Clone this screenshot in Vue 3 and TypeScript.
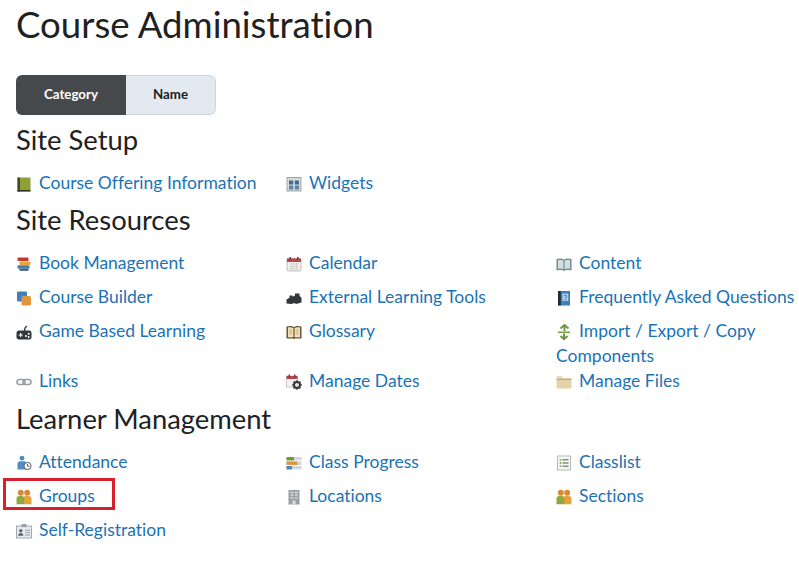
<template>
  <div class="page">
    <h1 class="title">Course Administration</h1>

    <div class="toggle">
      <button class="toggle-btn active">Category</button>
      <button class="toggle-btn name">Name</button>
    </div>

    <section v-for="section in sections" :key="section.title" class="section">
      <h2 class="section-title">{{ section.title }}</h2>
      <ul class="links">
        <li v-for="link in section.links" :key="link.label" class="link-item">
          <svg class="icon" viewBox="0 0 16 16" v-html="icons[link.icon]"></svg>
          <a href="#" class="link">{{ link.label }}</a>
          <span v-if="link.marked" class="marker"></span>
        </li>
      </ul>
    </section>
  </div>
</template>

<script setup lang="ts">
interface CourseLink {
  label: string;
  icon: string;
  marked?: boolean;
}

// small colour icons, 16 unit box
const icons: Record<string, string> = {
  offering: '<rect x="1.5" y="1.5" width="13" height="14" fill="#8f9e3a"/><rect x="1.5" y="1.5" width="2.5" height="14" fill="#3d4a24"/><rect x="1.5" y="14" width="13" height="1.5" fill="#2f3a20"/>',
  widgets: '<rect x="1" y="1.5" width="14" height="13.5" fill="#d7dadd" stroke="#8d949a" stroke-width=".8"/><rect x="3" y="4.5" width="4.2" height="4" fill="#44688f"/><rect x="8.8" y="4.5" width="4.2" height="4" fill="#44688f"/><rect x="3" y="9.5" width="4.2" height="4" fill="#5d83a8"/><rect x="8.8" y="9.5" width="4.2" height="4" fill="#5d83a8"/>',
  book: '<rect x="1.5" y="1.5" width="11" height="3.6" rx="1" fill="#c0392f"/><rect x="3.5" y="5.4" width="11" height="3.6" rx="1" fill="#e5a63a"/><rect x="1.5" y="9.2" width="12" height="3.6" rx="1" fill="#3d7fb5"/><rect x="3.5" y="12.8" width="9" height="2" fill="#4b5a63"/>',
  calendar: '<rect x="1" y="2.5" width="14" height="12.5" rx="1" fill="#f4f1ec" stroke="#aaa" stroke-width=".7"/><rect x="1" y="2.5" width="14" height="3.5" fill="#b6474a"/><rect x="3.5" y="1" width="1.5" height="3" fill="#7a3436"/><rect x="11" y="1" width="1.5" height="3" fill="#7a3436"/><path d="M3 8h10M3 10.500h10M3 13h10M5.500 7v6.500M8 7v6.500M10.500 7v6.500" stroke="#c2c2c2" stroke-width=".6"/>',
  content: '<path d="M.5 3C3.500 2 6.500 2.500 8 3.600 9.500 2.500 12.500 2 15.500 3v11.500C12.500 13.500 9.500 14 8 15c-1.500-1-4.500-1.500-7.500-.5z" fill="#6f9096"/><path d="M2 4.200c2.400-.6 4.300-.2 5.400.6v8.400C6.300 12.600 4.400 12.300 2 12.700zM14 4.200c-2.400-.6-4.300-.2-5.400.6v8.400c1.100-.6 3-.9 5.400-.5z" fill="#d3dfe1"/>',
  builder: '<rect x="1" y="1.500" width="10" height="10" rx="1" fill="#3f7fc4"/><rect x="5.500" y="6" width="9.500" height="9.500" rx="1.500" fill="#e2963c"/>',
  tools: '<path d="M.5 13.500V9.500l3-1.800V5.500h3v1.300L9 5.500V3.500h4.500v2.300L15.500 8v4.500l-5.500 1.500-1.500-1-3 1z" fill="#33373a"/>',
  faq: '<rect x="2" y="1" width="12" height="14.500" fill="#3f7fb8"/><rect x="2" y="1" width="2.800" height="14.500" fill="#1f2d3a"/><rect x="6.300" y="3.500" width="6" height="7.500" fill="#a8cde8"/><path d="M8 6c.4-1 2.700-1 2.700.3 0 1-1.300 1-1.300 2" fill="none" stroke="#2f6ba0" stroke-width=".9"/><rect x="9" y="9" width="1" height="1" fill="#2f6ba0"/>',
  game: '<path d="M8.500 7c0-2.500.5-4 2.500-5" fill="none" stroke="#33373a" stroke-width="1.300"/><rect x=".5" y="6.500" width="15" height="9" rx="2.500" fill="#33373a"/><path d="M2.700 11h4M4.700 9v4" stroke="#fff" stroke-width="1.100"/><circle cx="10" cy="12" r="1" fill="#fff"/><circle cx="12.700" cy="9.800" r="1" fill="#fff"/><circle cx="12.700" cy="13" r="1" fill="#fff"/>',
  glossary: '<path d="M.5 2.500c3-1 6-.7 7.500.5 1.500-1.200 4.500-1.500 7.500-.5v12H9l-1 .8-1-.8H.5z" fill="#6e5334"/><path d="M2 3.500c2.200-.5 4.200-.3 5.400.5v9.300H2zM14 3.500c-2.200-.5-4.200-.3-5.400.5v9.300H14z" fill="#f2e2bd"/><path d="M3.200 6h3M3.200 8h3M3.200 10h3M9.800 6h3M9.800 8h3M9.800 10h3" stroke="#b89a66" stroke-width=".7"/>',
  copy: '<path d="M4.500 4.500 8.500 1l4 3.500M8.500 1.500V7" fill="none" stroke="#6d9640" stroke-width="2"/><path d="M2 8.200h12" stroke="#6d9640" stroke-width="1.400"/><path d="M4.500 12 8 15.200 11.500 12M8 9.500v5.500" fill="none" stroke="#6d9640" stroke-width="2"/>',
  links: '<rect x="1" y="5.500" width="8" height="5" rx="2.500" fill="none" stroke="#9aa0a4" stroke-width="1.600"/><rect x="7" y="5.500" width="8" height="5" rx="2.500" fill="none" stroke="#9aa0a4" stroke-width="1.600"/>',
  dates: '<rect x=".5" y="2" width="11" height="11" fill="#f1f1f1" stroke="#aaa" stroke-width=".6"/><rect x=".5" y="2" width="11" height="3" fill="#b6474a"/><rect x="2.500" y=".5" width="1.400" height="3" fill="#7a3436"/><rect x="8" y=".5" width="1.400" height="3" fill="#7a3436"/><circle cx="11" cy="11" r="3" fill="none" stroke="#34383b" stroke-width="2"/><path d="M11 6.200v2M11 13.800v2M6.200 11h2M13.800 11h2M7.600 7.600l1.400 1.400M13 13l1.400 1.400M7.600 14.400 9 13M13 9l1.400-1.400" stroke="#34383b" stroke-width="1.500"/>',
  files: '<path d="M.5 3.500C.5 2.800 1 2.300 1.700 2.300h4l1.600 1.600h7c.7 0 1.200.5 1.200 1.200v8.200c0 .7-.5 1.200-1.200 1.200H1.700c-.7 0-1.200-.5-1.200-1.200z" fill="#e4d3a8"/><rect x=".5" y="5" width="15" height="1" fill="#c5ad78"/>',
  attendance: '<circle cx="6" cy="3.200" r="2.400" fill="#4d8fc4"/><path d="M1.500 14.500V9c0-1.500 1.200-2.800 2.800-2.800h3.400C9.300 6.200 10.500 7.500 10.500 9v5.500z" fill="#4d8fc4"/><circle cx="11.500" cy="11" r="3.600" fill="#f4f4f4" stroke="#5a5f63" stroke-width="1"/><path d="M11.500 9v2.200h1.800" fill="none" stroke="#5a5f63" stroke-width=".9"/>',
  progress: '<rect x=".5" y="2" width="15" height="3.400" fill="#cfd6dd"/><rect x=".5" y="2" width="7.500" height="3.400" fill="#6f9a42"/><rect x=".5" y="6.500" width="15" height="3.400" fill="#cfd6dd"/><rect x=".5" y="6.500" width="11" height="3.400" fill="#e1923a"/><rect x=".5" y="11" width="15" height="3.400" fill="#cfd6dd"/><rect x=".5" y="11" width="5.500" height="3.400" fill="#4a86c0"/>',
  classlist: '<rect x="1.500" y="1" width="13" height="14" fill="#f6f7f3" stroke="#a6aaa8" stroke-width=".8"/><path d="M6.500 4.800h6M6.500 8h6M6.500 11.200h6" stroke="#4b5a50" stroke-width="1"/><path d="M3.700 4.800h1.500M3.700 8h1.500M3.700 11.200h1.500" stroke="#5d8c3c" stroke-width="1.300"/>',
  groups: '<circle cx="4.800" cy="3.800" r="3" fill="#d88a36"/><circle cx="11.200" cy="3.800" r="3" fill="#d88a36"/><path d="M8 8.500C8 7.500 8.700 7 9.500 7h3.300C14.300 7 15.500 8 15.500 9.500v5.800H8z" fill="#e6a23c"/><path d="M.5 15.300V9.500C.5 8 1.700 7 3.200 7H6c1.200 0 2.200.9 2.200 2.200v6.100z" fill="#8fa93e"/>',
  locations: '<rect x="2.500" y="1" width="11" height="14.500" fill="#9a9fa2"/><path d="M4.500 3.500h3M8.800 3.500h3M4.500 6.200h3M8.800 6.200h3M4.500 8.900h3M8.800 8.900h3" stroke="#dcdedf" stroke-width="1.300"/><rect x="6.500" y="11.500" width="3" height="4" fill="#dcdedf"/>',
  registration: '<rect x=".5" y="3" width="15" height="12" fill="#e9ecee" stroke="#8f979c" stroke-width=".8"/><rect x="5.500" y="1" width="5" height="3.200" fill="#9aa2a7"/><circle cx="4.800" cy="7.800" r="1.700" fill="#5a6369"/><path d="M2.200 12.800c0-1.800 1.100-2.800 2.600-2.800s2.600 1 2.600 2.800z" fill="#5a6369"/><path d="M9 7.300h5M9 9.700h5M9 12.100h5" stroke="#8f979c" stroke-width=".9"/>',
};

const sections: { title: string; links: CourseLink[] }[] = [
  {
    title: 'Site Setup',
    links: [
      { label: 'Course Offering Information', icon: 'offering' },
      { label: 'Widgets', icon: 'widgets' },
    ],
  },
  {
    title: 'Site Resources',
    links: [
      { label: 'Book Management', icon: 'book' },
      { label: 'Calendar', icon: 'calendar' },
      { label: 'Content', icon: 'content' },
      { label: 'Course Builder', icon: 'builder' },
      { label: 'External Learning Tools', icon: 'tools' },
      { label: 'Frequently Asked Questions', icon: 'faq' },
      { label: 'Game Based Learning', icon: 'game' },
      { label: 'Glossary', icon: 'glossary' },
      { label: 'Import / Export / Copy Components', icon: 'copy' },
      { label: 'Links', icon: 'links' },
      { label: 'Manage Dates', icon: 'dates' },
      { label: 'Manage Files', icon: 'files' },
    ],
  },
  {
    title: 'Learner Management',
    links: [
      { label: 'Attendance', icon: 'attendance' },
      { label: 'Class Progress', icon: 'progress' },
      { label: 'Classlist', icon: 'classlist' },
      { label: 'Groups', icon: 'groups', marked: true },
      { label: 'Locations', icon: 'locations' },
      { label: 'Sections', icon: 'groups' },
      { label: 'Self-Registration', icon: 'registration' },
    ],
  },
];
</script>

<style scoped>
.page {
  width: 799px;
  height: 582px;
  overflow: hidden;
  padding-left: 16px;
  box-sizing: border-box;
  background: #fff;
  font-family: Lato, "Liberation Sans", sans-serif;
  font-variant-ligatures: none;
  color: #202122;
}

.title {
  margin: 0 0 30px;
  height: 45px;
  font-size: 36.6px;
  line-height: 49px;
  font-weight: 400;
}

.toggle {
  display: flex;
  width: 200px;
  height: 40px;
  margin-bottom: 10px;
  border-radius: 6px;
  overflow: hidden;
}

.toggle-btn {
  border: 1px solid #cdd5dc;
  border-left: none;
  background: #e3e9f1;
  color: #202122;
  font-family: inherit;
  font-size: 13.3px;
  font-weight: 700;
  padding: 0 0 2px;
  flex: 0 0 90px;
  border-radius: 0 6px 6px 0;
}

.toggle-btn.active {
  flex: 0 0 110px;
  background: #45494c;
  border: none;
  color: #fff;
  border-radius: 0;
}

.section {
  padding-bottom: 1px;
}

.section:last-child {
  margin-top: 1px;
}

.section-title {
  margin: 0 0 15px;
  font-size: 27.4px;
  line-height: 30px;
  font-weight: 400;
}

.links {
  list-style: none;
  margin: 0;
  padding: 0;
  display: grid;
  grid-template-columns: repeat(3, 270px);
}

.link-item {
  position: relative;
  min-height: 34px;
  font-size: 17.5px;
  line-height: 25px;
}

.icon {
  display: inline-block;
  width: 16px;
  height: 16px;
  margin-right: 7px;
  vertical-align: -3px;
}

.link {
  color: #1a73b5;
  text-decoration: none;
}

.marker {
  position: absolute;
  left: -13px;
  top: -5px;
  width: 112px;
  height: 32px;
  box-sizing: border-box;
  border: 3px solid #d9202e;
}
</style>
